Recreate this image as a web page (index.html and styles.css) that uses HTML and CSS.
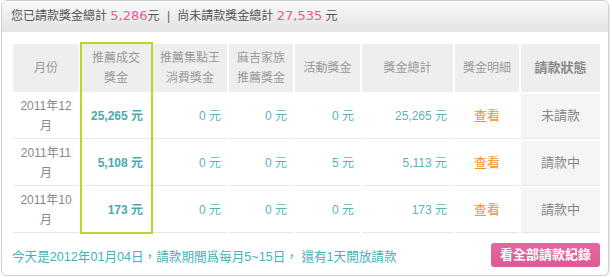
FILE: index.html
```html
<!DOCTYPE html>
<html lang="zh-Hant">
<head>
<meta charset="utf-8">
<title>請款獎金</title>
<link rel="stylesheet" href="styles.css">
</head>
<body>
<div class="panel">
  <div class="panel-head">
    您已請款獎金總計 <span class="num">5,286</span>元 <span class="sep">|</span> 尚未請款獎金總計 <span class="num">27,535</span> 元
  </div>
  <div class="panel-body">
    <div class="table-wrap">
      <table class="bonus">
        <colgroup>
          <col class="c-month"><col class="c-deal"><col class="c-point"><col class="c-family"><col class="c-event"><col class="c-total"><col class="c-detail"><col class="c-status">
        </colgroup>
        <thead>
          <tr>
            <th>月份</th>
            <th>推薦成交<br>獎金</th>
            <th>推薦集點王<br>消費獎金</th>
            <th>麻吉家族<br>推薦獎金</th>
            <th>活動獎金</th>
            <th>獎金總計</th>
            <th>獎金明細</th>
            <th class="strong">請款狀態</th>
          </tr>
        </thead>
        <tbody>
          <tr>
            <td class="month">2011年12<br>月</td>
            <td class="amt bold">25,265 元</td>
            <td class="amt">0 元</td>
            <td class="amt">0 元</td>
            <td class="amt">0 元</td>
            <td class="amt">25,265 元</td>
            <td class="view">查看</td>
            <td class="status">未請款</td>
          </tr>
          <tr>
            <td class="month">2011年11<br>月</td>
            <td class="amt bold">5,108 元</td>
            <td class="amt">0 元</td>
            <td class="amt">0 元</td>
            <td class="amt">5 元</td>
            <td class="amt">5,113 元</td>
            <td class="view">查看</td>
            <td class="status">請款中</td>
          </tr>
          <tr>
            <td class="month">2011年10<br>月</td>
            <td class="amt bold">173 元</td>
            <td class="amt">0 元</td>
            <td class="amt">0 元</td>
            <td class="amt">0 元</td>
            <td class="amt">173 元</td>
            <td class="view">查看</td>
            <td class="status">請款中</td>
          </tr>
        </tbody>
      </table>
      <div class="highlight"></div>
    </div>
    <div class="foot">
      <p class="note">今天是2012年01月04日，請款期間爲每月5~15日， 還有1天開放請款</p>
      <a class="btn" href="#">看全部請款紀錄</a>
    </div>
  </div>
</div>
</body>
</html>
```
FILE: styles.css
```css
html, body {
  margin: 0;
  padding: 0;
  background: #fff;
}
body {
  font-family: "Liberation Sans", "Noto Sans CJK TC", sans-serif;
  font-size: 12px;
}
.panel {
  margin-left: 1px;
  width: 608px;
  height: 276px;
  box-sizing: border-box;
  border: 1px solid #cfcfcf;
  border-radius: 6px;
  overflow: hidden;
  box-shadow: 1px 1px 1px rgba(0,0,0,0.08);
}
.panel-head {
  height: 31px;
  box-sizing: border-box;
  padding: 6px 0 0 9px;
  background: linear-gradient(#f9f9f9, #e3e3e3);
  border-bottom: 1px solid #e6e6e6;
  color: #555;
  font-size: 12px;
  line-height: 18px;
}
.panel-head .num {
  font-family: "DejaVu Sans", "Liberation Sans", sans-serif;
  color: #ea5b9c;
  font-size: 13px;
}
.panel-head .sep {
  margin: 0 4px;
  color: #666;
}
.panel-body {
  padding: 10px 0 0 9px;
}
.table-wrap {
  position: relative;
  width: 591px;
}
.bonus {
  width: 591px;
  table-layout: fixed;
  border-collapse: separate;
  border-spacing: 2px;
  font-size: 12px;
}
.c-month { width: 66px; }
.c-deal { width: 70px; }
.c-point { width: 74px; }
.c-family { width: 64px; }
.c-event { width: 65px; }
.c-total { width: 91px; }
.c-detail { width: 64px; }
.c-status { width: 79px; }
.bonus th {
  height: 48px;
  padding: 0;
  background: #eeeeee;
  color: #9a9a9a;
  font-weight: normal;
  line-height: 20px;
  text-align: center;
}
.bonus th.strong {
  color: #888;
  font-weight: bold;
  font-size: 13px;
}
.bonus td {
  height: 44px;
  padding: 0 6px;
  border-bottom: 1px solid #e8e8e8;
  line-height: 20px;
}
.bonus td.month {
  text-align: center;
  color: #888;
  padding: 0;
}
.bonus td.amt {
  text-align: right;
  color: #5ab3b8;
}
.bonus td.amt.bold {
  font-weight: bold;
  color: #4aaab0;
  padding-right: 8px;
}
.bonus td.view {
  text-align: center;
  color: #f7931e;
  font-size: 13px;
}
.bonus td.status {
  text-align: center;
  color: #888;
  background: #f5f5f5;
  font-size: 13px;
}
.highlight {
  position: absolute;
  left: 69px;
  top: 0;
  width: 73px;
  height: 192px;
  box-sizing: border-box;
  border: 2px solid #bdd52b;
  pointer-events: none;
}
.foot {
  display: flex;
  align-items: center;
  justify-content: space-between;
  margin-top: 8px;
  padding-right: 8px;
}
.note {
  margin: 0 0 0 1px;
  color: #45b1b8;
  font-size: 12.6px;
  line-height: 20px;
  padding-top: 4px;
}
.btn {
  display: block;
  width: 109px;
  height: 24px;
  box-sizing: border-box;
  background: linear-gradient(#e6679f, #dc5a95);
  border-radius: 3px;
  color: #fff;
  font-weight: bold;
  font-size: 13px;
  line-height: 24px;
  text-align: center;
  text-decoration: none;
}
```
